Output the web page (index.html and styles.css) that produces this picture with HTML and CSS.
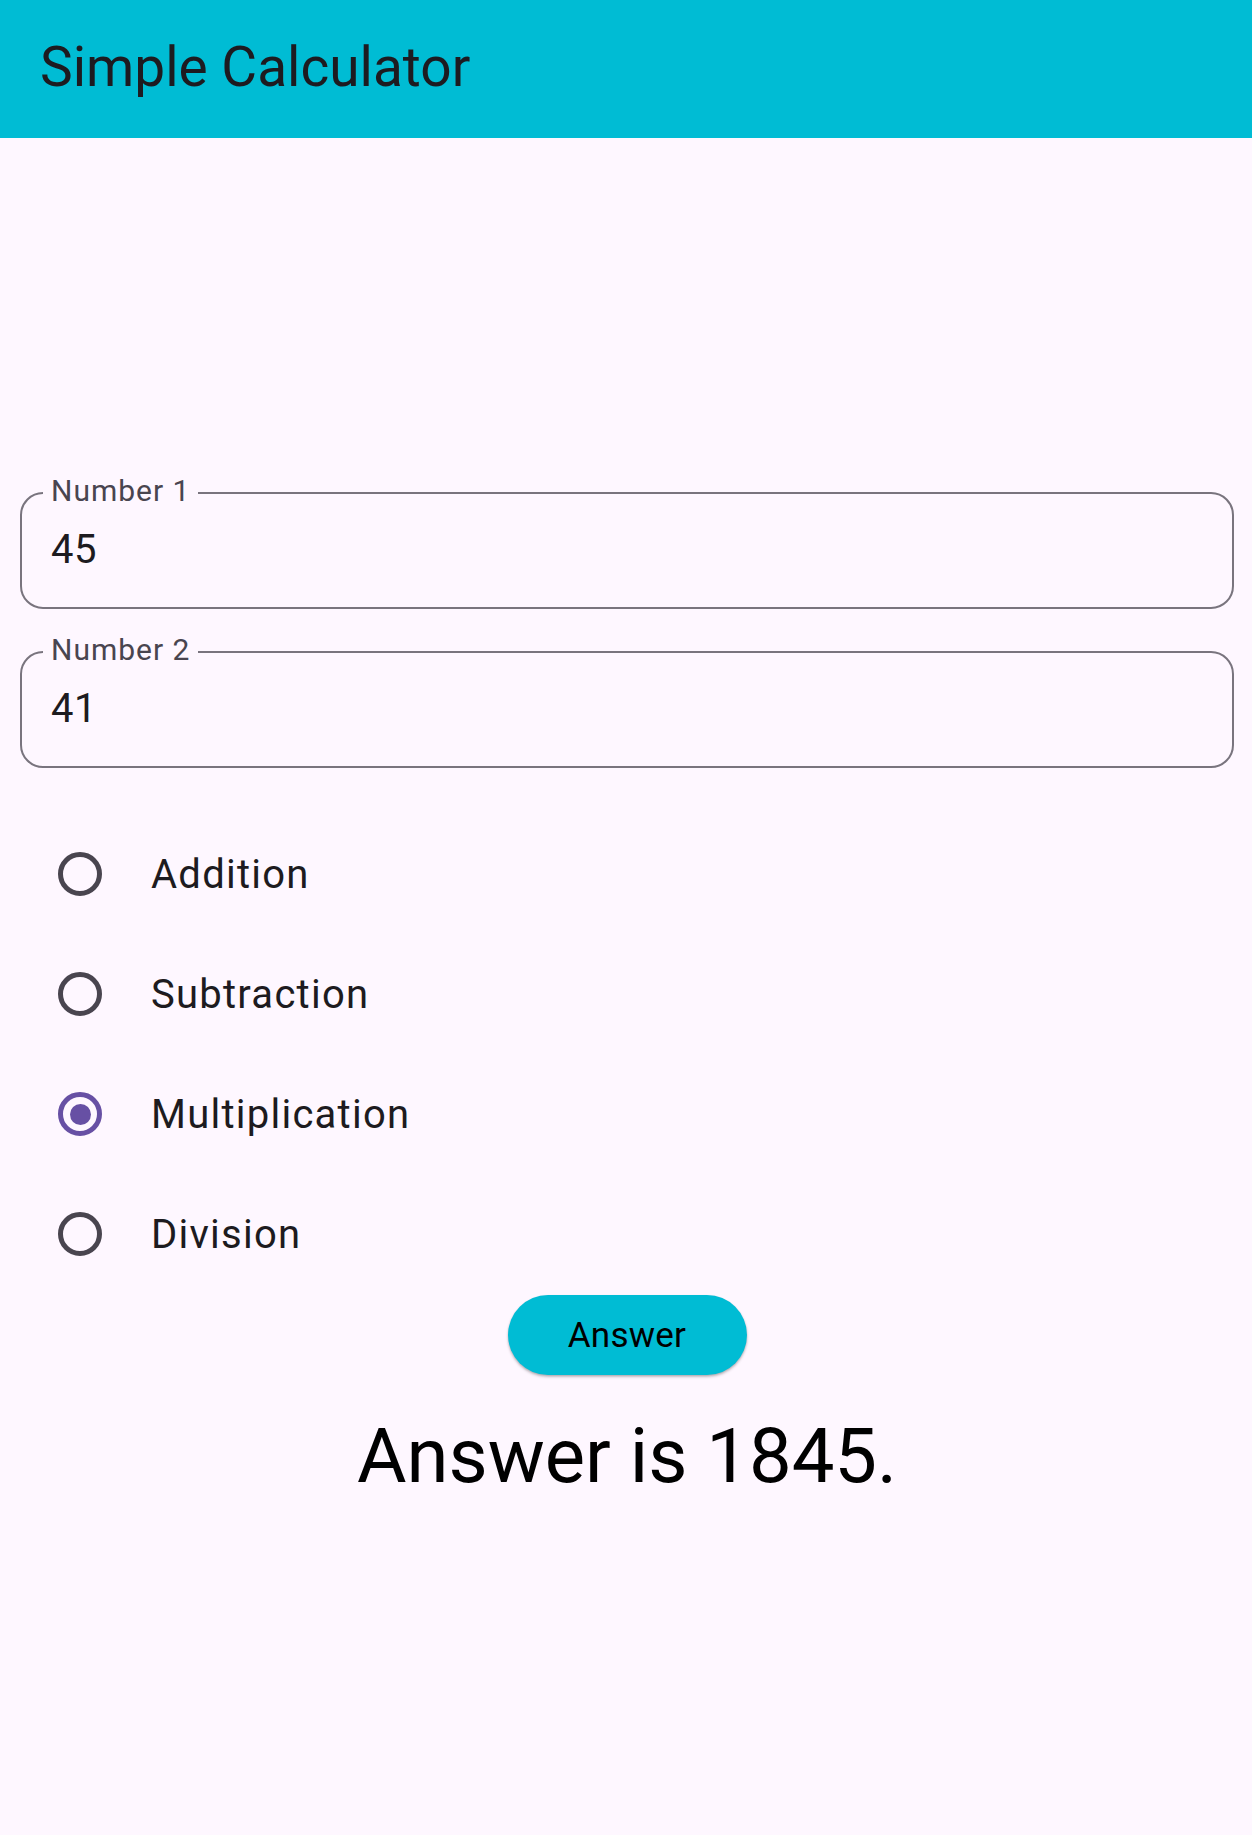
FILE: index.html
```html
<!DOCTYPE html>
<html lang="en">
<head>
<meta charset="utf-8">
<title>Simple Calculator</title>
<link rel="stylesheet" href="styles.css">
</head>
<body>
<header class="appbar">
  <h1 class="appbar-title">Simple Calculator</h1>
</header>
<main class="content">
  <div class="field field-first">
    <span class="field-label">Number 1</span>
    <div class="field-value">45</div>
  </div>
  <div class="field field-second">
    <span class="field-label">Number 2</span>
    <div class="field-value">41</div>
  </div>
  <ul class="radio-list">
    <li class="radio-row"><span class="radio"></span><span class="radio-text">Addition</span></li>
    <li class="radio-row"><span class="radio"></span><span class="radio-text">Subtraction</span></li>
    <li class="radio-row"><span class="radio radio-on"><span class="radio-dot"></span></span><span class="radio-text">Multiplication</span></li>
    <li class="radio-row"><span class="radio"></span><span class="radio-text">Division</span></li>
  </ul>
  <div class="button-row">
    <button class="answer-btn" type="button">Answer</button>
  </div>
  <p class="result">Answer is 1845.</p>
</main>
</body>
</html>
```
FILE: styles.css
```css
html, body {
  margin: 0;
  padding: 0;
}
body {
  background: #fef7ff;
  font-family: Roboto, "Liberation Sans", sans-serif;
  color: #1d1b20;
  width: 1252px;
  min-height: 1835px;
}
.appbar {
  height: 138px;
  background: #00bcd4;
  display: flex;
  align-items: center;
  padding-left: 40px;
  box-sizing: border-box;
}
.appbar-title {
  margin: 0;
  padding-bottom: 4px;
  font-size: 55px;
  line-height: 64px;
  font-weight: 400;
  color: #1d1b20;
}
.content {
  padding: 0 18px 0 20px;
  display: flex;
  flex-direction: column;
}
.field {
  position: relative;
  border: 2px solid #79747e;
  border-radius: 23px;
  padding: 32px 29px 33px;
}
.field-first {
  margin-top: 354px;
}
.field-second {
  margin-top: 42px;
}
.field-label {
  position: absolute;
  top: -18px;
  left: 21px;
  padding: 0 8px;
  background: #fef7ff;
  font-size: 30px;
  line-height: 30px;
  letter-spacing: 1px;
  color: #49454f;
}
.field-value {
  font-size: 40px;
  line-height: 48px;
  letter-spacing: 0.5px;
  color: #1d1b20;
}
.radio-list {
  list-style: none;
  margin: 46px 0 0;
  padding: 0;
}
.radio-row {
  height: 120px;
  display: flex;
  align-items: center;
  padding-left: 38px;
}
.radio {
  width: 44px;
  height: 44px;
  box-sizing: border-box;
  border: 5px solid #49454f;
  border-radius: 50%;
  display: flex;
  align-items: center;
  justify-content: center;
  flex-shrink: 0;
}
.radio-on {
  border-color: #6750a4;
}
.radio-dot {
  width: 21px;
  height: 21px;
  border-radius: 50%;
  background: #6750a4;
}
.radio-text {
  margin-left: 49px;
  font-size: 40px;
  letter-spacing: 1.25px;
  color: #1d1b20;
}
.button-row {
  display: flex;
  justify-content: center;
  margin-top: 1px;
}
.answer-btn {
  height: 80px;
  width: 239px;
  border: none;
  border-radius: 40px;
  background: #00bcd4;
  color: #000;
  font-family: Roboto, "Liberation Sans", sans-serif;
  font-size: 35px;
  font-weight: 400;
  letter-spacing: 0.25px;
  padding: 0;
  box-shadow: 0 2px 3px rgba(0, 0, 0, 0.22), 0 1px 2px rgba(0, 0, 0, 0.12);
}
.result {
  margin: 36px 0 0;
  text-align: center;
  font-size: 76px;
  color: #000;
}
```
